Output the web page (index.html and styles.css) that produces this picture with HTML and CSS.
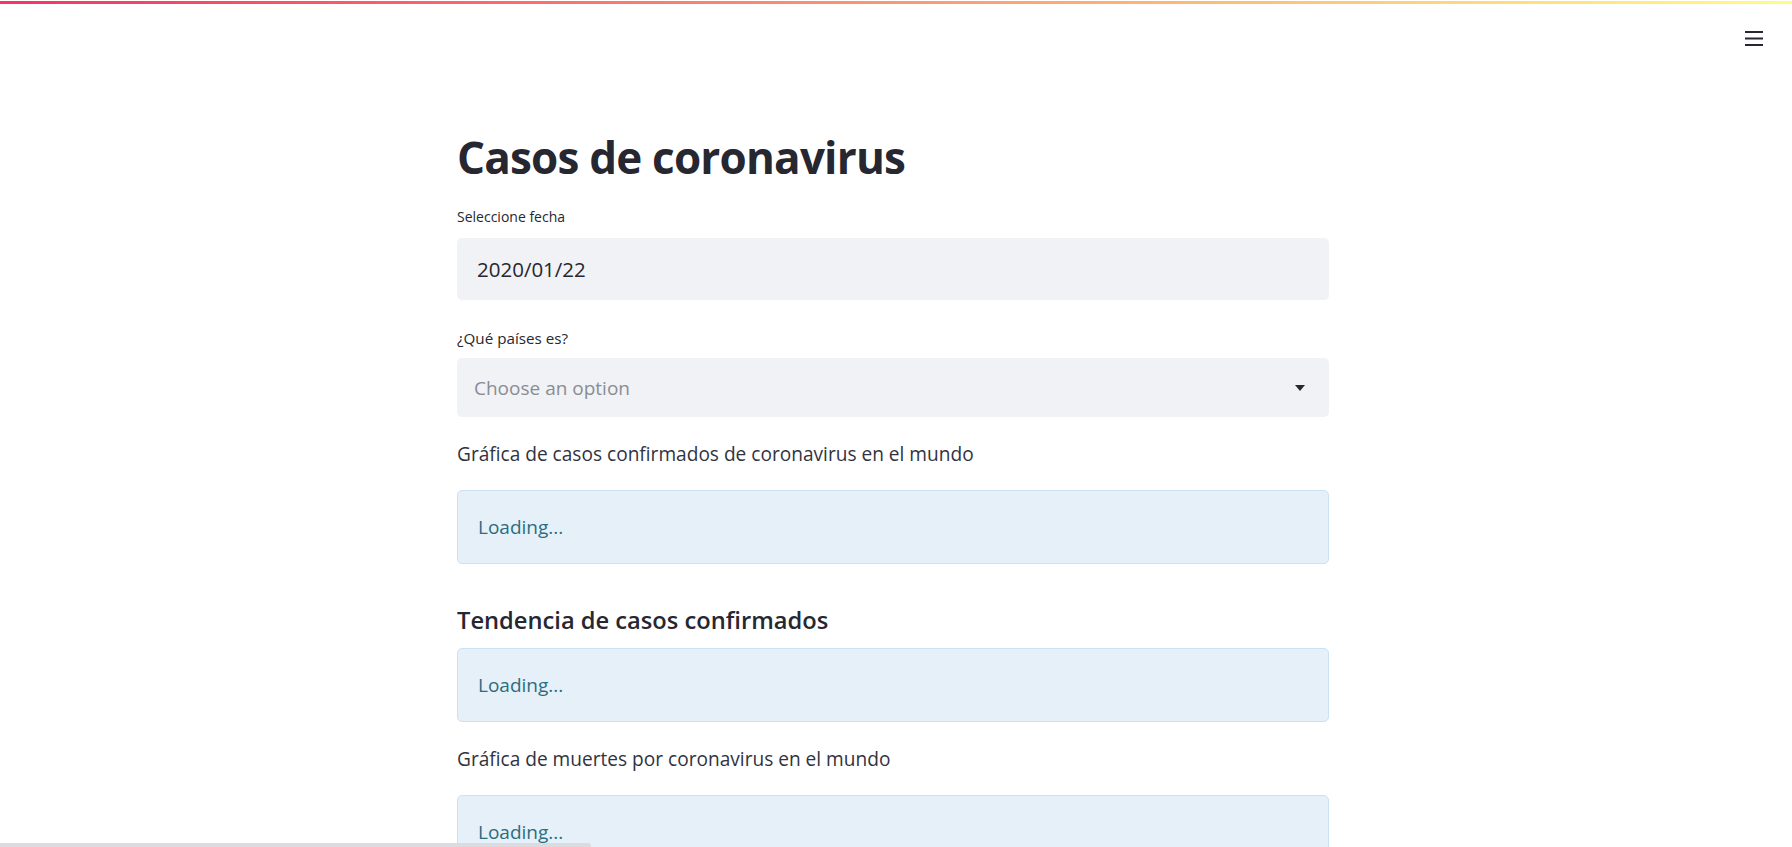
FILE: index.html
```html
<!DOCTYPE html>
<html lang="es">
<head>
<meta charset="utf-8">
<title>Casos de coronavirus</title>
<link rel="stylesheet" href="styles.css">
</head>
<body>
<div class="decoration"></div>
<header class="topbar">
  <button class="menu" aria-label="Menu">
    <svg width="18" height="15" viewBox="0 0 18 15"><rect x="0" y="0" width="18" height="2" fill="#262730"/><rect x="0" y="6.5" width="18" height="2" fill="#262730"/><rect x="0" y="13" width="18" height="2" fill="#262730"/></svg>
  </button>
</header>
<main class="block">
  <h1 class="title">Casos de coronavirus</h1>

  <label class="label">Seleccione fecha</label>
  <div class="field">2020/01/22</div>

  <label class="label label-second">¿Qué países es?</label>
  <div class="field select">
    <span class="placeholder">Choose an option</span>
    <svg class="caret" width="10" height="6" viewBox="0 0 10 6"><path d="M0 0 L10 0 L5 6 Z" fill="#262730"/></svg>
  </div>

  <p class="text">Gráfica de casos confirmados de coronavirus en el mundo</p>
  <div class="alert">Loading...</div>

  <h3 class="subtitle">Tendencia de casos confirmados</h3>
  <div class="alert alert-tight">Loading...</div>

  <p class="text text-second">Gráfica de muertes por coronavirus en el mundo</p>
  <div class="alert">Loading...</div>
</main>
<div class="hscroll"></div>
</body>
</html>
```

FILE: styles.css
```css
html, body {
  margin: 0;
  padding: 0;
  background: #ffffff;
}
body {
  font-family: "Open Sans", "Noto Sans", sans-serif;
  color: #262730;
  padding-right: 6px;
  overflow: hidden;
}
.decoration {
  position: fixed;
  top: 1px;
  left: 0;
  right: 0;
  height: 3px;
  background: linear-gradient(90deg, #f63366, #fffd80);
}
.topbar {
  height: 76px;
  display: flex;
  justify-content: flex-end;
  align-items: center;
  padding-right: 23px;
}
.menu {
  border: 0;
  background: transparent;
  padding: 0;
  width: 18px;
  height: 15px;
  display: flex;
}
.block {
  width: 872px;
  margin: 0 auto;
  padding-top: 53px;
  display: flex;
  flex-direction: column;
}
.title {
  margin: 0;
  font-size: 44px;
  line-height: 56px;
  font-weight: 700;
  letter-spacing: -0.8px;
  color: #262730;
}
.label {
  display: block;
  margin-top: 22px;
  font-size: 14px;
  line-height: 20px;
  color: #262730;
}
.label-second {
  margin-top: 28px;
  font-size: 15.2px;
}
.field {
  margin-top: 11px;
  height: 62px;
  box-sizing: border-box;
  background: #f0f2f6;
  border-radius: 5px;
  padding: 0 20px;
  display: flex;
  align-items: center;
  font-size: 20.5px;
  color: #262730;
}
.select {
  margin-top: 10px;
  height: 59px;
  padding: 0 24px 0 17px;
  justify-content: space-between;
  font-size: 19px;
}
.placeholder {
  color: #8a8c94;
}
.caret {
  display: block;
}
.text {
  margin: 23px 0 0;
  font-size: 19.1px;
  line-height: 28px;
  color: #31333f;
}
.text-second {
  margin-top: 23px;
}
.alert {
  margin-top: 22px;
  height: 74px;
  box-sizing: border-box;
  background: #e6f0f9;
  border: 1px solid #cde1f4;
  border-radius: 5px;
  padding: 0 20px;
  display: flex;
  align-items: center;
  font-size: 19px;
  color: #2c6d80;
}
.alert-tight {
  margin-top: 12px;
}
.subtitle {
  margin: 40px 0 0;
  font-size: 23.7px;
  line-height: 32px;
  font-weight: 600;
  color: #262730;
}
.hscroll {
  position: fixed;
  left: 0;
  bottom: 0;
  width: 591px;
  height: 4px;
  background: #dadce0;
  border-radius: 0 3px 0 0;
}
```
